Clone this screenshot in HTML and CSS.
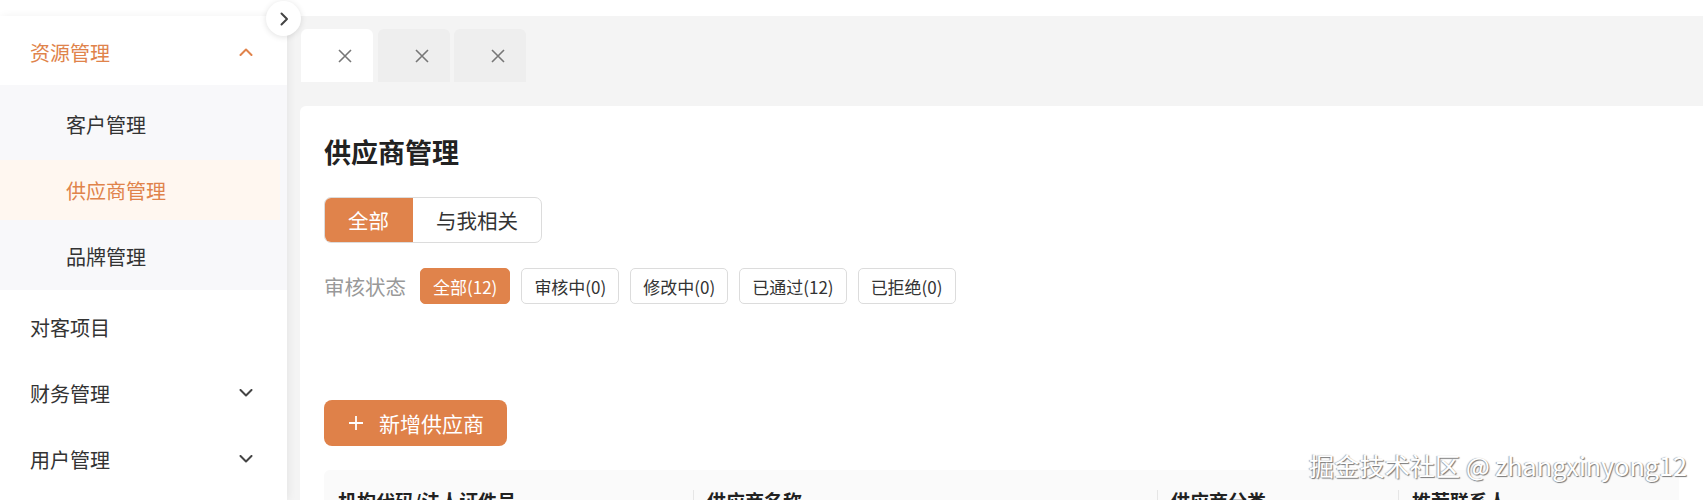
FILE: index.html
```html
<!DOCTYPE html>
<html lang="zh-CN">
<head>
    <meta charset="UTF-8">
    <meta name="viewport" content="width=device-width, initial-scale=1.0">
    <title>供应商管理</title>
    <link rel="stylesheet" href="styles.css">
</head>
<body>
    <div class="header"></div>
    <div class="layout">
        <aside class="sidebar">
            <button class="collapse">
                <svg width="10" height="14" viewBox="0 0 10 14"><path d="M2.5 1.5 L8 7 L2.5 12.5" fill="none" stroke="#444" stroke-width="2" stroke-linecap="round" stroke-linejoin="round"/></svg>
            </button>
            <div class="menu-item open">
                <span>资源管理</span>
                <svg width="14" height="8" viewBox="0 0 14 8"><path d="M1.5 7 L7 1.5 L12.5 7" fill="none" stroke="#e0834b" stroke-width="2" stroke-linecap="round" stroke-linejoin="round"/></svg>
            </div>
            <div class="submenu">
                <div class="sub-item">客户管理</div>
                <div class="sub-item active">供应商管理</div>
                <div class="sub-item">品牌管理</div>
            </div>
            <div class="menu-item"><span>对客项目</span></div>
            <div class="menu-item">
                <span>财务管理</span>
                <svg width="14" height="8" viewBox="0 0 14 8"><path d="M1.5 1 L7 6.5 L12.5 1" fill="none" stroke="#444" stroke-width="2" stroke-linecap="round" stroke-linejoin="round"/></svg>
            </div>
            <div class="menu-item">
                <span>用户管理</span>
                <svg width="14" height="8" viewBox="0 0 14 8"><path d="M1.5 1 L7 6.5 L12.5 1" fill="none" stroke="#444" stroke-width="2" stroke-linecap="round" stroke-linejoin="round"/></svg>
            </div>
        </aside>

        <main class="main">
            <div class="tabs">
                <div class="tab active">
                    <svg class="tab-close" width="14" height="14" viewBox="0 0 14 14"><path d="M1 1 L13 13 M13 1 L1 13" stroke="#777" stroke-width="1.6"/></svg>
                </div>
                <div class="tab">
                    <svg class="tab-close" width="14" height="14" viewBox="0 0 14 14"><path d="M1 1 L13 13 M13 1 L1 13" stroke="#777" stroke-width="1.6"/></svg>
                </div>
                <div class="tab">
                    <svg class="tab-close" width="14" height="14" viewBox="0 0 14 14"><path d="M1 1 L13 13 M13 1 L1 13" stroke="#777" stroke-width="1.6"/></svg>
                </div>
            </div>

            <section class="card">
                <h1 class="title">供应商管理</h1>

                <div class="segment">
                    <span class="seg active">全部</span>
                    <span class="seg">与我相关</span>
                </div>

                <div class="status-row">
                    <span class="status-label">审核状态</span>
                    <span class="chip active">全部(12)</span>
                    <span class="chip">审核中(0)</span>
                    <span class="chip">修改中(0)</span>
                    <span class="chip">已通过(12)</span>
                    <span class="chip">已拒绝(0)</span>
                </div>

                <button class="btn-add">
                    <svg width="16" height="16" viewBox="0 0 16 16"><path d="M8 1 V15 M1 8 H15" stroke="#fff" stroke-width="1.8"/></svg>
                    新增供应商
                </button>

                <div class="table-head">
                    <div class="th">机构代码/法人证件号</div>
                    <div class="th">供应商名称</div>
                    <div class="th">供应商分类</div>
                    <div class="th">推荐联系人</div>
                </div>
            </section>
        </main>
    </div>

    <div class="watermark">掘金技术社区 @ zhangxinyong12</div>
</body>
</html>
```

FILE: styles.css
```css
body {
    margin: 0;
    height: 500px;
    overflow: hidden;
    font-family: "Noto Sans CJK SC", "Noto Sans", sans-serif;
    color: #333;
    background-color: #f4f4f4;
}
.header {
    height: 16px;
    background-color: #fff;
}
.layout {
    display: flex;
    height: calc(100vh - 16px);
}

/* sidebar */
.sidebar {
    position: relative;
    z-index: 2;
    width: 287px;
    flex-shrink: 0;
    padding-top: 3px;
    background-color: #fff;
    box-shadow: 2px 0 8px rgba(0, 0, 0, 0.06);
}
.collapse {
    position: absolute;
    top: -15px;
    left: 266px;
    width: 35px;
    height: 35px;
    padding: 0;
    border: none;
    border-radius: 50%;
    background-color: #fff;
    box-shadow: 0 1px 6px rgba(0, 0, 0, 0.12);
    display: flex;
    align-items: center;
    justify-content: center;
}
.menu-item {
    height: 66px;
    padding: 0 34px 0 30px;
    display: flex;
    align-items: center;
    justify-content: space-between;
    font-size: 20px;
}
.menu-item.open {
    color: #e0834b;
}
.submenu {
    display: flex;
    flex-direction: column;
    gap: 6px;
    padding: 9px 0 4px;
    margin-bottom: 4px;
    background-color: #f8f8fa;
}
.sub-item {
    height: 60px;
    margin-right: 7px;
    padding-left: 66px;
    display: flex;
    align-items: center;
    font-size: 20px;
}
.sub-item.active {
    color: #e0834b;
    background-color: #fff7f0;
}

/* main */
.main {
    flex: 1;
    padding-left: 13px;
    display: flex;
    flex-direction: column;
}
.tabs {
    display: flex;
    gap: 4.5px;
    margin: 13px 0 24px 1px;
}
.tab {
    width: 72px;
    height: 53px;
    padding-right: 21px;
    box-sizing: border-box;
    display: flex;
    align-items: center;
    justify-content: flex-end;
    background-color: #eeeeee;
    border-radius: 6px 6px 0 0;
}
.tab.active {
    background-color: #fff;
}
.card {
    flex: 1;
    padding: 28px 24px 0;
    background-color: #fff;
    border-radius: 6px 0 0 0;
}
.title {
    margin: 0;
    font-size: 27px;
    line-height: 36px;
    font-weight: 700;
    color: #222;
}
.segment {
    display: inline-flex;
    margin-top: 27px;
    height: 46px;
    box-sizing: border-box;
    border: 1px solid #dcdcdc;
    border-radius: 7px;
    overflow: hidden;
}
.seg {
    display: flex;
    align-items: center;
    padding: 0 23px;
    font-size: 20.5px;
}
.seg.active {
    margin: -1px 0 -1px -1px;
    padding: 0 24px;
    color: #fff;
    background-color: #e0834b;
}
.status-row {
    display: flex;
    align-items: center;
    gap: 11px;
    margin-top: 25px;
}
.status-label {
    margin-right: 3px;
    font-size: 20.5px;
    color: #999;
}
.chip {
    height: 36px;
    box-sizing: border-box;
    padding: 0 12px;
    display: flex;
    align-items: center;
    font-size: 17px;
    border: 1px solid #dcdcdc;
    border-radius: 5px;
}
.chip.active {
    color: #fff;
    border-color: #e0834b;
    background-color: #e0834b;
}
.btn-add {
    display: flex;
    align-items: center;
    gap: 15px;
    margin-top: 96px;
    height: 46px;
    padding: 0 23px 0 24px;
    font-family: inherit;
    font-size: 21px;
    color: #fff;
    background-color: #df8149;
    border: none;
    border-radius: 8px;
}
.table-head {
    display: grid;
    grid-template-columns: 369px 464px 241px 1fr;
    margin-top: 24px;
    background-color: #fafafa;
    border-radius: 6px 0 0 0;
}
.th {
    position: relative;
    padding: 17px 14px;
    font-size: 19px;
    font-weight: 700;
    color: #222;
    white-space: nowrap;
}
.th + .th::before {
    content: "";
    position: absolute;
    left: 0;
    top: 20px;
    bottom: 0;
    width: 1px;
    background-color: #e6e6e6;
}

.watermark {
    position: absolute;
    right: 16px;
    bottom: 19px;
    font-size: 25.2px;
    line-height: 32px;
    color: #fff;
    text-shadow: 1px 1px 1px #777, -1px 0 1px #aaa;
}
```
